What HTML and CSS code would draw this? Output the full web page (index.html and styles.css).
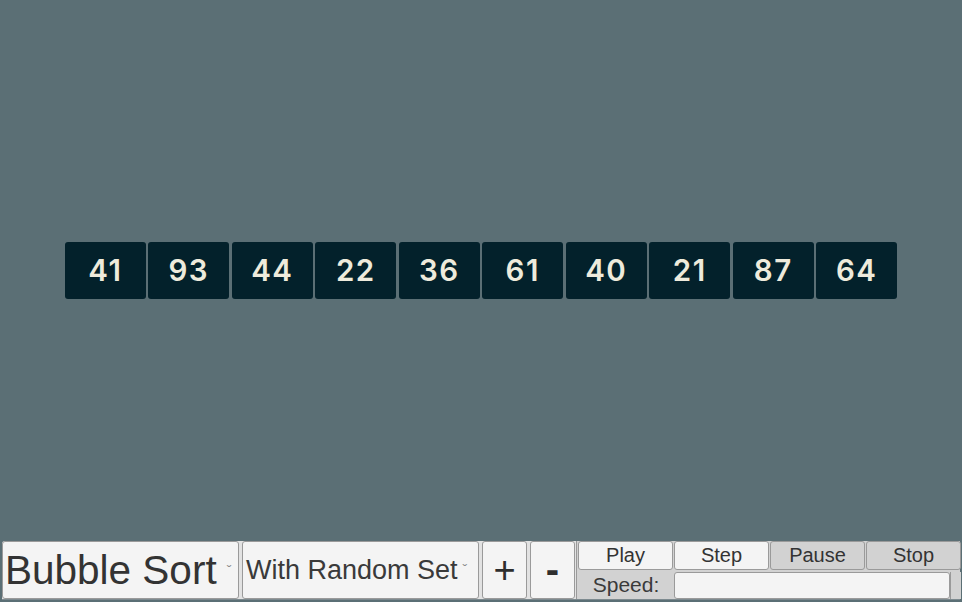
FILE: index.html
```html
<!DOCTYPE html>
<html>
<head>
<meta charset="utf-8">
<link rel="stylesheet" href="styles.css">
</head>
<body>
<div class="app">
  <div class="stage">
    <div class="cells">
      <div class="cell">41</div>
      <div class="cell">93</div>
      <div class="cell">44</div>
      <div class="cell">22</div>
      <div class="cell">36</div>
      <div class="cell">61</div>
      <div class="cell">40</div>
      <div class="cell">21</div>
      <div class="cell">87</div>
      <div class="cell">64</div>
    </div>
  </div>
  <div class="bar">
    <div class="box choice algo"><span class="label">Bubble Sort</span><span class="arrow">&#711;</span></div>
    <div class="box choice dataset"><span class="label">With Random Set</span><span class="arrow">&#711;</span></div>
    <div class="box btn plus">+</div>
    <div class="box btn minus">-</div>
    <div class="controls">
      <div class="box ctl light">Play</div>
      <div class="box ctl light">Step</div>
      <div class="box ctl dim">Pause</div>
      <div class="box ctl dim">Stop</div>
      <div class="speed-label">Speed:</div>
      <div class="slider-wrap">
        <div class="box slider"></div>
        <div class="slider-end"></div>
      </div>
    </div>
  </div>
</div>
</body>
</html>
```

FILE: styles.css
```css
html, body {
  margin: 0;
  padding: 0;
}
body {
  background: #5b6f75;
  font-family: "Liberation Sans", Arial, sans-serif;
}
.app {
  width: 962px;
  height: 602px;
  display: flex;
  flex-direction: column;
}
.stage {
  height: 541px;
  display: flex;
  align-items: center;
  justify-content: center;
}
.cells {
  display: flex;
  gap: 2.2px;
  margin-top: -1px;
}
.cell {
  width: 81.3px;
  height: 57px;
  background: #03212b;
  border-radius: 3px;
  color: #eeebdc;
  font-family: "Inter", sans-serif;
  font-weight: 600;
  font-size: 29.5px;
  letter-spacing: 1.5px;
  display: flex;
  align-items: center;
  justify-content: center;
}
.bar {
  height: 59px;
  margin: 0 2px 0 2px;
  background: #e2e2e2;
  border-radius: 3px 3px 0 0;
  display: flex;
  gap: 3px;
  border-bottom: 1px solid #7d8a8f;
  box-sizing: border-box;
}
.box {
  box-sizing: border-box;
  border: 1px solid #9a9a9a;
  border-radius: 3px;
  background: #f4f4f4;
  color: #333;
  display: flex;
  align-items: center;
}
.choice {
  width: 237px;
  padding-left: 2px;
}
.algo {
  font-size: 40.5px;
}
.dataset {
  font-size: 27px;
  padding-left: 3px;
  color: #3a3a3a;
}
.label {
  line-height: 1;
}
.arrow {
  color: #888;
  font-size: 14px;
  margin-left: 10px;
  margin-top: 2px;
}
.dataset .arrow {
  margin-left: 5px;
  margin-top: 0;
}
.btn {
  width: 45px;
  justify-content: center;
  font-size: 38px;
  color: #2e2e2e;
}
.minus {
  font-size: 40px;
  font-weight: 700;
  padding-bottom: 2px;
}
.controls {
  width: 384px;
  display: grid;
  grid-template-columns: 96px 96px 96px 96px;
  grid-template-rows: 29px 1fr;
  background: #d2d2d2;
  border-left: 1px solid #9a9a9a;
  margin-left: -2px;
  box-sizing: border-box;
}
.ctl {
  justify-content: center;
  font-size: 20px;
  margin: 0 0 0 1px;
}
.dim {
  background: #d2d2d2;
}
.speed-label {
  display: flex;
  align-items: center;
  justify-content: center;
  font-size: 21px;
  color: #3a3a3a;
  background: #d2d2d2;
  padding-left: 2px;
}
.slider-wrap {
  grid-column: 2 / 5;
  display: flex;
  padding-top: 2px;
}
.slider {
  flex: 1;
  margin-left: 1px;
}
.slider-end {
  width: 11px;
  background: #d2d2d2;
  border-left: 1px solid #9a9a9a;
  box-sizing: border-box;
}
```
